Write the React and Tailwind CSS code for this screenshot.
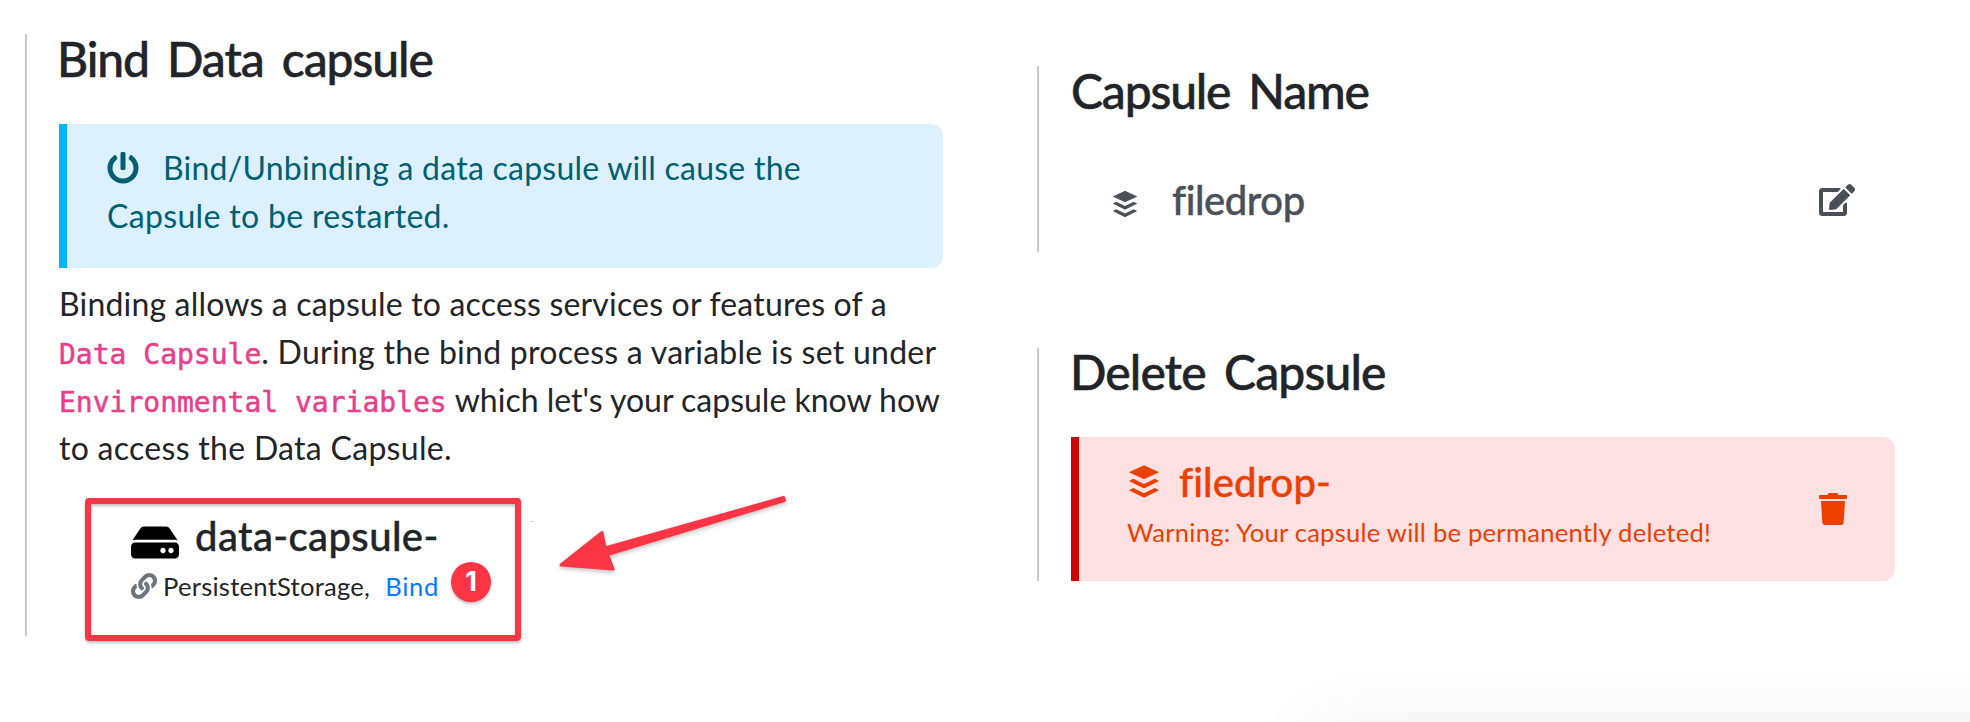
import { FaPowerOff, FaBuffer, FaEdit, FaTrash, FaLink, FaHdd } from "react-icons/fa";

function BindPanel() {
  return (
    <section className="ml-[25px] mt-[34px] h-[602px] w-[920px] shrink-0 border-l-2 border-[#c8c8c8] pl-8">
      <h2 className="-ml-[2px] text-5xl leading-[49px] font-medium tracking-[-1.06px] whitespace-nowrap [word-spacing:7px] [-webkit-text-stroke:0.5px]">
        Bind Data capsule
      </h2>

      <div className="mt-[41px] h-36 w-[884px] rounded-r-xl border-l-8 border-[#00b5ff] bg-[#dcf0ff] px-10 pt-5 text-[32px] leading-[48px] whitespace-nowrap text-[#006072]">
        <div className="flex">
          <FaPowerOff className="mt-[8px] size-8 shrink-0" />
          <span className="ml-[24px] tracking-[0.24px]">Bind/Unbinding a data capsule will cause the</span>
        </div>
        <div className="tracking-[0.33px]">Capsule to be restarted.</div>
      </div>

      <div className="mt-3 text-[32px] leading-[48px] whitespace-nowrap">
        <div className="tracking-[0.18px]">Binding allows a capsule to access services or features of a</div>
        <div className="flex h-12 items-baseline">
          <code className="font-['DejaVu_Sans_Mono',monospace] text-[28px] text-[#e83e8c] [-webkit-text-stroke:0.5px]">Data Capsule</code>
          <span className="tracking-[0.27px]">. During the bind process a variable is set under</span>
        </div>
        <div className="flex h-12 items-baseline">
          <code className="font-['DejaVu_Sans_Mono',monospace] text-[28px] text-[#e83e8c] [-webkit-text-stroke:0.5px]">Environmental variables</code>
          <span className="ml-[8px] tracking-[-0.01px]">which let's your capsule know how</span>
        </div>
        <div className="tracking-[0.29px]">to access the Data Capsule.</div>
      </div>

      <div className="relative mt-[26px] ml-[26px] h-[143px] w-[436px] rounded-[4px] border-[6px] border-[#fc3545] pt-[8px] pl-[40px] whitespace-nowrap shadow-[0_2px_3px_rgba(0,0,0,0.25),inset_0_2px_3px_rgba(0,0,0,0.25)]">
        <div className="flex h-[55px]">
          <FaHdd className="mt-[9px] h-[43px] w-12 shrink-0 text-black" />
          <span className="ml-[16px] text-[40px] leading-[49px] font-medium tracking-[0.4px] [-webkit-text-stroke:0.4px]">data-capsule-</span>
        </div>
        <div className="flex text-[25.6px] leading-[38px]">
          <FaLink className="mt-[6px] size-[26px] shrink-0 text-[#6c757d]" />
          <span className="ml-[6px] tracking-[0.24px]">PersistentStorage,</span>
          <a className="ml-[15px] tracking-[0.7px] text-[#007bff]">Bind</a>
        </div>
        <span className="absolute top-[58px] left-[360px] flex size-10 items-center justify-center rounded-full bg-[#fc3545] font-['Inter',sans-serif] text-[27px] font-bold text-white shadow-[0_2px_3px_rgba(0,0,0,0.25)]">
          1
        </span>
      </div>
    </section>
  );
}

function NamePanel() {
  return (
    <section className="h-[186px] border-l-2 border-[#c8c8c8] pl-8 whitespace-nowrap">
      <h2 className="text-5xl leading-[49px] font-medium tracking-[-1.17px] [word-spacing:7px] [-webkit-text-stroke:0.5px]">Capsule Name</h2>
      <div className="mt-[61px] flex h-12 w-[784px] pl-[41px] text-[#495057]">
        <FaBuffer className="mt-[13px] h-[30px] w-[26px] shrink-0" />
        <span className="ml-[34px] text-[40px] leading-[49px] font-medium tracking-[-0.44px] [-webkit-text-stroke:0.4px]">filedrop</span>
        <FaEdit className="mt-[8px] ml-auto h-8 w-9 shrink-0" />
      </div>
    </section>
  );
}

function DeletePanel() {
  return (
    <section className="mt-24 h-[233px] border-l-2 border-[#c8c8c8] pl-8 whitespace-nowrap">
      <h2 className="-ml-px text-5xl leading-[47px] font-medium tracking-[-0.86px] [word-spacing:7px] [-webkit-text-stroke:0.5px]">Delete Capsule</h2>
      <div className="mt-[42px] flex h-36 w-[824px] justify-between rounded-r-xl border-l-8 border-[#d00000] bg-[#ffe1e4] pr-12 pl-12 text-[#ec4000]">
        <div className="pt-[21px]">
          <div className="flex h-[55px]">
            <FaBuffer className="mt-[5px] ml-[1px] h-[37px] w-8 shrink-0" />
            <span className="ml-[19px] text-[40px] leading-[48px] font-medium tracking-[0.1px] [-webkit-text-stroke:0.4px]">filedrop-</span>
          </div>
          <div className="text-[25.6px] leading-[38px] tracking-[0.24px]">Warning: Your capsule will be permanently deleted!</div>
        </div>
        <FaTrash className="mt-14 h-8 w-7 shrink-0" />
      </div>
    </section>
  );
}

function Arrow() {
  return (
    <svg className="absolute top-[480px] left-[525px] h-[110px] w-[280px] overflow-visible drop-shadow-[0_2px_2px_rgba(0,0,0,0.25)]" viewBox="525 480 280 110">
      <path
        d="M561 565 L602 532.5 L605 548 L783.5 497.5 L784.5 500.5 L607.500 554.5 L613 569 Z"
        fill="#fc3545"
        stroke="#fc3545"
        strokeWidth="3"
        strokeLinejoin="round"
      />
    </svg>
  );
}

export default function App() {
  return (
    <main className="relative flex h-[722px] w-[1970px] overflow-hidden bg-white font-['Lato',sans-serif] text-[#212529]">
      <BindPanel />
      <div className="ml-[92px] w-[860px] pt-[66px]">
        <NamePanel />
        <DeletePanel />
      </div>
      <Arrow />
      <span className="absolute top-[521px] left-[530px] h-px w-[3px] bg-[#cccccc]" />
      <div className="absolute top-[742px] left-[1320px] h-20 w-[800px] shadow-[0_0_80px_rgba(0,0,0,0.12)]" />
    </main>
  );
}
